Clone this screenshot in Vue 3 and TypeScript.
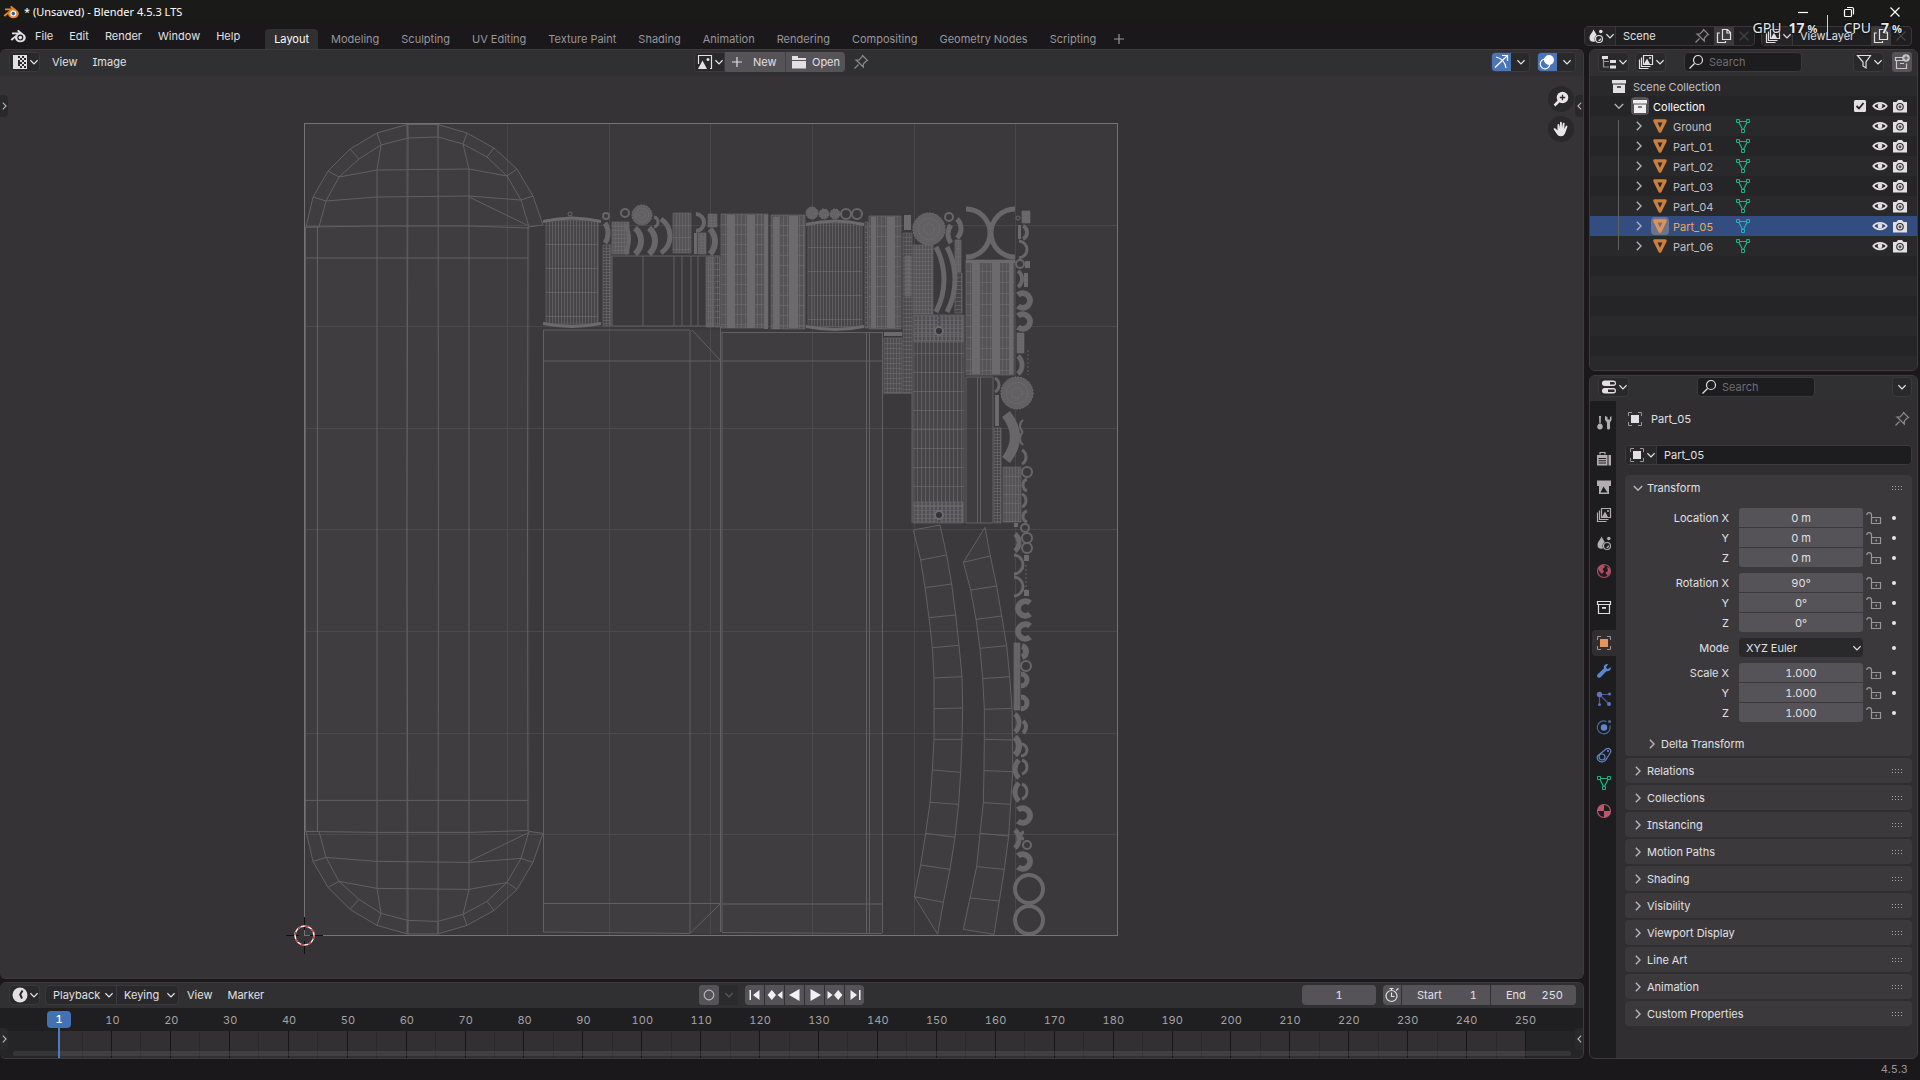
<script setup lang="ts">
import { h, ref } from 'vue'

const icons: Record<string, string> = {
  blender: '<path d="M.6 11.200 6.800 6.200H2V4.600h6.800L7 3l1.300-1.200 5.900 4.600c1.200 1 1.700 2.400 1.500 3.800-.4 2.500-2.600 4.100-5.400 4.100-2.900 0-5.100-1.700-5.300-4.200L2 12.700z" fill="currentColor"/><circle cx="10.300" cy="9.600" r="3" fill="var(--hole)"/><circle cx="10.300" cy="9.600" r="1.800" fill="var(--eye)"/>',
  down: '<path d="m3.200 5.700 4.800 4.800 4.800-4.800" class="s w"/>',
  right: '<path d="m5.500 3.200 4.800 4.800-4.800 4.800" class="s w"/>',
  left: '<path d="M10.500 3.200 5.700 8l4.800 4.800" class="s w"/>',
  uv: '<path d="M1 1h14v14H1z" fill="currentColor"/><path d="M6 2h8v12H6z" fill="#29282a"/><path d="M8 2h2v2H8zm4 0h2v2h-2zM6 4h2v2H6zm4 0h2v2h-2zM8 6h2v2H8zm4 0h2v2h-2zM10 8h2v2h-2zM8 10h2v2H8zm4 0h2v2h-2zm-2 2h2v2h-2zm-4 0h2v2H6z" fill="currentColor"/>',
  image: '<path d="M1.500 10V1.500h13v13H13" class="s"/><path d="M1 15 5.500 6.500 10 15z" fill="currentColor"/><circle cx="11" cy="5.500" r="1.500" fill="currentColor"/>',
  plus: '<path d="M8 3v10M3 8h10" class="s"/>',
  folder: '<path d="M1 2h6v2h8v2H1zM1 7h14v7.500H1z" fill="currentColor"/>',
  pin: '<path d="m9.500 1.500 5 5-1.500.8-2.700 2.700v3L8.200 11 5 7.800 3 6h3L8.700 3.200zM5.500 10.500 1.500 14.500" class="s"/>',
  copy: '<path d="M6.500 1.500h5l3 3v7h-8zM11 2v3h3" class="s"/><path d="M4 5H1.500v9.500h8V13" class="s"/>',
  close: '<path d="m3.500 3.500 9 9m0-9-9 9" class="s"/>',
  scene: '<path d="M5.500 1.500C7 4.500 9.500 7 9 10a3.600 3.600 0 0 1-7.500 0C1.300 7 4.500 4.500 5.500 1.500z" fill="currentColor"/><circle cx="11" cy="11" r="4.500" fill="var(--bg,#29282a)"/><circle cx="11" cy="11" r="3.500" class="s"/><path d="M10.500 12.500a2 2 0 0 0 2-2" class="s"/><circle cx="12.800" cy="3.500" r="1.800" fill="currentColor"/>',
  layers: '<path d="M5.500 1.500h9v9h-9zM3.500 3.500v9h9M1.500 5.500v9h9" class="s"/><path d="m6 10 3-5.500L12 10z" fill="currentColor"/><circle cx="12" cy="4" r="1" fill="currentColor"/>',
  tree: '<path d="M1 2h6v3H1zm8 4h6v3H9zm0 5.500h6v3H9z" fill="currentColor"/><path d="M2.500 5v8H8M2.500 7.500H8" class="s t"/>',
  search: '<circle cx="10" cy="6" r="4.500" class="s"/><path d="M6.500 9.500 1.500 14.500" class="s"/>',
  filter: '<path d="M1.500 1.500h13L10 8v6l-3-2V8z" class="s"/>',
  newcol: '<path d="M9 3.500H1.500v3h10M2.500 6.500v8h10v-5M6 9.500h4" class="s"/><circle cx="12" cy="4" r="3.800" fill="currentColor"/><path d="M12 1.800v4.400M9.800 4h4.400" stroke="#555357" fill="none"/>',
  collection: '<path d="M1 2h14v3.500H1zM2 6.500h12V15H2zm4 1.800v1.500h4V8.300z" fill="currentColor" fill-rule="evenodd"/>',
  collectionO: '<path d="M1.500 2.500h13v3h-13zM2.500 5.500v9h11v-9" class="s"/><path d="M6 8h4v1.800H6z" fill="currentColor"/>',
  object: '<path d="M2.800 2.800h10.400L8 13.200z" fill="none" stroke="currentColor" stroke-width="3.200" stroke-linejoin="round"/>',
  mesh: '<path d="M3.500 3.500h9L8 12.500z" class="s"/><path d="M1.500 1.500h3v3h-3zm10 0h3v3h-3zm-5 10h3v3h-3z" fill="var(--bg,#29282a)" stroke="currentColor"/>',
  eye: '<path d="M1.300 8C4 3.700 12 3.700 14.700 8 12 12.300 4 12.300 1.300 8z" fill="none" stroke="currentColor" stroke-width="1.800"/><circle cx="8" cy="8" r="2.400" fill="currentColor"/>',
  camera: '<path d="M1 4h3.500L6 2h4l1.500 2H15v10.500H1z" fill="currentColor"/><circle cx="8" cy="8.700" r="3.800" fill="#29282a"/><circle cx="8" cy="8.700" r="2.700" fill="currentColor"/><circle cx="8" cy="8.700" r="1.500" fill="#555"/>',
  check: '<rect x="2" y="2" width="12" height="12" rx="1.500" fill="currentColor"/><path d="m4.500 8 2.500 2.500L11.500 5" fill="none" stroke="#222" stroke-width="1.800"/>',
  props: '<rect x="1" y="1.500" width="14" height="5.500" rx="2.700" fill="currentColor"/><path d="M9 3h3.500a1.300 1.300 0 0 1 0 2.600H9z" fill="#29282a"/><rect x="1" y="9" width="14" height="5.500" rx="2.700" fill="currentColor"/><path d="M7 10.500h5.500a1.300 1.300 0 0 1 0 2.600H7z" fill="#29282a"/>',
  box: '<path d="M4 4h8v8H4z" fill="currentColor"/><path d="M1.500 5V1.500H5m6 0h3.500V5m0 6v3.500H11m-6 0H1.500V11" fill="none" stroke="#98969a"/>',
  tool: '<path d="M3 1h2l-.3 7H3.300zM3 8.500h2c2.500 2 2.500 5.500-1 6-3.500-.5-3.500-4-1-6z" fill="currentColor"/><path d="M9 1v4l2 2.500V13a1.500 1.500 0 0 0 3 0V7.500L15.500 5V1L14 2v2.500h-2.500V2z" fill="currentColor"/>',
  render: '<path d="M4 3.500V1.500h5v2" class="s"/><path d="M1 4h10.500v10.500H1zm1.500 3v1h7.500V7zm0 2.300v1h7.500v-1zm0 2.300v1h7.500v-1zM12.500 4H15v10.500h-2.500z" fill="currentColor" fill-rule="evenodd"/>',
  print: '<path d="M1 1.500h14V7H1z" fill="currentColor"/><path d="M3 6h10v9H3z" fill="currentColor"/><path d="m4.500 13.500 3-6 4 6z" fill="#1d1c1f"/>',
  world: '<circle cx="8" cy="8" r="6.500" class="s"/><path d="M2 5c1-2 3.500-3.500 6-3L9 4 6.500 6 8 8.500 6 11 3.500 8.500zM11 4l3 1.500.3 3.500L11.500 13 9.500 9.500 12 8z" fill="currentColor"/>',
  wrench: '<path d="M14.800 4 11.800 6.200 10 4.400 12 1.200C9.500.6 7.300 2.500 7.800 5.500L1.500 11.500c-1.500 2 1 4.300 2.900 2.900l6-6.200c3 .6 4.900-1.500 4.400-4.200z" fill="currentColor"/>',
  particles: '<path d="M4 3.500h8M3.500 5v7M4.500 4.500l8 8" class="s" opacity=".7"/><circle cx="3.500" cy="3.500" r="2.700" fill="currentColor"/><circle cx="13.500" cy="3" r="1.500" fill="currentColor"/><circle cx="3.500" cy="13.500" r="1.500" fill="currentColor"/><circle cx="13" cy="13" r="2" fill="currentColor"/>',
  physics: '<circle cx="8" cy="8.500" r="3.200" fill="currentColor"/><path d="M10.500 2.500A6.500 6.500 0 1 0 14 6.500" class="s" opacity=".7"/><circle cx="13.500" cy="2.500" r="1.600" fill="currentColor" opacity=".7"/>',
  constraint: '<circle cx="6" cy="10" r="3" class="s" stroke-width="2"/><path d="M1.500 9 10 2c3-2 6 1 4.200 3.800L10.500 12A5 5 0 0 1 2 13 4.500 4.500 0 0 1 1.500 9z" class="s"/><circle cx="12" cy="4" r="1.100" fill="currentColor"/>',
  material: '<circle cx="8" cy="8" r="6.500" class="s"/><path d="M8 1.500A6.500 6.500 0 0 0 1.500 8H8zM8 8v6.500A6.500 6.500 0 0 0 14.500 8z" fill="currentColor"/>',
  lock: '<path d="M5.500 8V5a2.300 2.300 0 0 0-4.700 0M5.500 7.500h9v6h-9z" class="s"/><path d="M9.500 9.500h1.500v2H9.500z" fill="currentColor"/>',
  clock: '<circle cx="8" cy="8" r="7.500" fill="currentColor"/><path d="M10.500 3.500 8.200 7.500 10 11.500" fill="none" stroke="#29282a" stroke-width="2"/>',
  watch: '<circle cx="7.500" cy="9" r="5.500" class="s"/><path d="M5.500 1.500h4M7.500 1.500v2M7.500 5.500V9.500h3M12 3.500l2.500-2" class="s"/>',
  record: '<circle cx="8" cy="8" r="4.800" class="s"/>',
  first: '<path d="M2.500 3H4v10H2.500zM12.500 3v10L6 8z" fill="currentColor"/>',
  last: '<path d="M12 3h1.500v10H12zM3.500 3v10L10 8z" fill="currentColor"/>',
  prevkey: '<path d="M4.800 3 9 8l-4.200 5L.6 8zM15.500 4v8L10.500 8z" fill="currentColor"/>',
  nextkey: '<path d="M11.200 3 15.400 8l-4.200 5L7 8zM.5 4v8l5-4z" fill="currentColor"/>',
  play: '<path d="M3.500 2v12L14 8z" fill="currentColor"/>',
  back: '<path d="M12.500 2v12L2 8z" fill="currentColor"/>',
  gizmo: '<path d="M3 3c5 1 9 5 10 11M9 1.500h5.500V7M14.500 1.500 2 13.500" class="s"/>',
  overlay: '<circle cx="6" cy="10" r="4.800" class="s"/><circle cx="10" cy="6" r="5" fill="currentColor"/><path d="M5.500 8.500a4.500 4.500 0 0 0 3 3" fill="none" stroke="#4c75b8"/>',
  zoom: '<circle cx="9.500" cy="6.500" r="5.800" fill="currentColor"/><path d="M6 10 1.500 14.500" stroke="currentColor" stroke-width="2.500"/><path d="M9.500 3.800v5.400M6.800 6.500h5.400" stroke="#29282a" stroke-width="1.300"/>',
  hand: '<path d="M4.500 9.500V4c0-1.300 1.600-1.300 1.800 0L6.800 7 7 1.800c.1-1.300 1.800-1.300 1.900 0V7l.9-4.500c.3-1.200 1.900-.9 1.800.3L11.200 8l1.600-3c.7-1.100 2-.4 1.600.8l-2.200 6.200C11.500 14 10 15.300 8 15.300c-2.500 0-3.600-1.300-4.800-3.300L.8 8.600C.2 7.300 1.600 6.700 2.500 7.600z" fill="currentColor"/>',
  minimise: '<path d="M3 8.500h10" class="s"/>',
  restore: '<rect x="3.500" y="5.500" width="7" height="7" rx="1" class="s"/><path d="M6 3.500h5a1.500 1.500 0 0 1 1.500 1.500v5.500" class="s"/>',
}

const Icon = (p: { name: string }) =>
  h('svg', { class: 'icon', viewBox: '0 0 16 16', 'aria-hidden': 'true', innerHTML: icons[p.name] })
Icon.props = ['name']

const menus = ['File', 'Edit', 'Render', 'Window', 'Help']
const workspaces = ['Layout', 'Modeling', 'Sculpting', 'UV Editing', 'Texture Paint', 'Shading', 'Animation', 'Rendering', 'Compositing', 'Geometry Nodes', 'Scripting']
const objects = ['Ground', 'Part_01', 'Part_02', 'Part_03', 'Part_04', 'Part_05', 'Part_06']
const active = ref('Part_05')
const frames = Array.from({ length: 25 }, (_, i) => (i + 1) * 10)
const transport = [
  ['first', 'Jump to start'], ['prevkey', 'Previous keyframe'], ['back', 'Play reverse'],
  ['play', 'Play'], ['nextkey', 'Next keyframe'], ['last', 'Jump to end'],
]
const tabs = [
  { icon: 'tool', label: 'Tool', color: '#b0aeb1', gap: true },
  { icon: 'render', label: 'Render', color: '#b0aeb1' },
  { icon: 'print', label: 'Output', color: '#b0aeb1' },
  { icon: 'layers', label: 'View Layer', color: '#b0aeb1' },
  { icon: 'scene', label: 'Scene', color: '#b0aeb1' },
  { icon: 'world', label: 'World', color: '#b04f63', gap: true },
  { icon: 'collectionO', label: 'Collection', color: '#e0dee1', gap: true },
  { icon: 'box', label: 'Object', color: '#e2945a', on: true },
  { icon: 'wrench', label: 'Modifiers', color: '#5c86cf' },
  { icon: 'particles', label: 'Particles', color: '#6074c4' },
  { icon: 'physics', label: 'Physics', color: '#5f87cc' },
  { icon: 'constraint', label: 'Constraints', color: '#5f87cc' },
  { icon: 'mesh', label: 'Data', color: '#20b183' },
  { icon: 'material', label: 'Material', color: '#b8586a' },
]
const groups = [
  { name: 'Location', values: ['0 m', '0 m', '0 m'] },
  { name: 'Rotation', values: ['90°', '0°', '0°'] },
  { name: 'Scale', values: ['1.000', '1.000', '1.000'] },
]
const axes = ['X', 'Y', 'Z']
const panels = ['Relations', 'Collections', 'Instancing', 'Motion Paths', 'Shading', 'Visibility', 'Viewport Display', 'Line Art', 'Animation', 'Custom Properties']

/* UV islands */
type P = [number, number]
const line = (pts: P[]) => 'M' + pts.map((p) => p.join(' ')).join('L')
const mirror = (pts: P[]): P[] => pts.map(([x, y]) => [x, 1058.4 - y])

const capOuter: P[] = [[306, 227], [313, 197], [328, 171], [350, 149], [377, 133], [407, 124.5], [438, 124.5], [467, 133], [494, 148], [517, 169], [533, 196], [543, 225]]
const capInner: P[] = [[319, 227], [326, 201], [339, 177], [359, 159], [381, 145], [408, 138], [438, 137], [463, 144], [487, 157], [507, 176], [521, 200], [529, 227]]
const capLines: P[][] = [
  capOuter, capInner,
  ...capOuter.map((p, i): P[] => [p, capInner[i]]),
  [[339, 177], [377, 170], [469, 169], [507, 176]],
  [[326, 201], [377, 197], [469, 196], [521, 200]],
  [[306, 227], [377, 226], [470, 226], [529, 228]],
  [[304, 258], [377, 258], [528, 258]],
  [[469, 197], [529, 226]],
  [[381, 145], [377, 170], [377, 530]], [[408, 125], [407, 530]], [[438, 125], [438.5, 530]],
  [[463, 144], [469, 169], [469, 530]], [[305.5, 227], [305.5, 530]], [[317.5, 227], [317.5, 530]],
  [[528, 227], [527.5, 530]],
]
const capsule = capLines.map(line).join('') + capLines.map((l) => line(mirror(l))).join('')
const capFace = line([...capOuter, [530, 227], [530, 831], ...mirror(capOuter).reverse()]) + 'Z'

const crop = (pts: P[]): P[] => pts.map(([x, y]) => [880 + x / 3, 520 + y / 3])
const s1l = crop([[100, 30], [122, 120], [135, 203], [147, 293], [157, 383], [162, 474], [162, 566], [162, 658], [157, 750], [150, 847], [137, 940], [122, 1035], [103, 1130]])
const s1r = crop([[180, 15], [200, 105], [215, 192], [227, 285], [237, 376], [246, 470], [248, 564], [246, 658], [242, 757], [236, 853], [225, 952], [210, 1048], [190, 1147]])
const s2l = crop([[250, 127], [272, 210], [288, 298], [300, 385], [308, 476], [313, 568], [313, 658], [312, 752], [310, 848], [300, 940], [290, 1040], [270, 1134], [250, 1228]])
const s2r = crop([[331, 108], [350, 198], [365, 288], [380, 377], [389, 470], [396, 565], [398, 660], [398, 755], [392, 853], [386, 948], [373, 1048], [358, 1143], [342, 1243]])
const rungs = (a: P[], b: P[]) => a.map((p, i) => line([p, b[i]])).join('')
const tip1 = crop([[190, 1147], [173, 1243], [103, 1130]])
const tip2 = crop([[250, 127], [315, 22], [331, 108]])
const strips = line(s1l) + line(s1r) + rungs(s1l, s1r) + line(s2l) + line(s2r) + rungs(s2l, s2r) + line(tip1) + line(tip2)
const stripFace = line([...s1l, tip1[1], ...[...s1r].reverse()]) + 'Z' + line([...s2l, ...[...s2r].reverse(), tip2[1]]) + 'Z'

const panelWires = [
  'M543.5 330H690V903M543.5 330V932M543.5 361H720M692 330 720 360M720.5 326V932M543.5 903.5H720M543.5 932 690 933.5 720 904M690 903V933',
  'M722 332.5H882M722 332V932M722 361H882M866.5 332V933M869.5 332V933M882.5 332V933M722 904H882M722 932.5 868 933.5H882',
  'M612 256H720M612 256V326H720M643 256V326M674 256V326M682 256V326M691 256V326M698 256V326',
  'M966 377H993V523H966ZM977.5 377V523M980.5 377V523M884 393H912V523',
].join('')

interface Hatch { x: number; y: number; w: number; h: number; dx: number; dy: number; a?: number }
const hatches: Hatch[] = [
  { x: 546, y: 220, w: 52, h: 104, dx: 3, dy: 24 },
  { x: 603, y: 245, w: 8, h: 81, dx: 3, dy: 3 },
  { x: 612, y: 222, w: 17, h: 32, dx: 3, dy: 4, a: 0.5 },
  { x: 673, y: 213, w: 18, h: 40, dx: 3, dy: 12, a: 0.4 },
  { x: 708, y: 214, w: 9, h: 13, dx: 3, dy: 3, a: 0.6 },
  { x: 698, y: 233, w: 8, h: 21, dx: 3, dy: 3, a: 0.6 },
  { x: 706, y: 257, w: 8, h: 70, dx: 2, dy: 6, a: 0.5 },
  { x: 715, y: 257, w: 5, h: 70, dx: 2, dy: 6 },
  { x: 721, y: 214, w: 47, h: 114, dx: 4, dy: 10, a: 0.4 },
  { x: 771, y: 215, w: 34, h: 114, dx: 4, dy: 10, a: 0.4 },
  { x: 808, y: 223, w: 54, h: 104, dx: 3, dy: 24 },
  { x: 865, y: 222, w: 3, h: 106, dx: 2, dy: 5 },
  { x: 869, y: 216, w: 32, h: 113, dx: 4, dy: 10, a: 0.4 },
  { x: 884, y: 338, w: 18, h: 55, dx: 3, dy: 5, a: 0.3 },
  { x: 903, y: 233, w: 9, h: 160, dx: 3, dy: 4, a: 0.25 },
  { x: 905, y: 256, w: 6, h: 40, dx: 3, dy: 4, a: 0.4 },
  { x: 913, y: 245, w: 20, h: 69, dx: 3, dy: 4, a: 0.4 },
  { x: 955, y: 240, w: 6, h: 32, dx: 3, dy: 8, a: 0.6 },
  { x: 955, y: 273, w: 7, h: 40, dx: 6, dy: 4 },
  { x: 966, y: 260, w: 48, h: 115, dx: 4, dy: 11, a: 0.4 },
  { x: 913, y: 315, w: 51, h: 208, dx: 4, dy: 19 },
  { x: 914, y: 316, w: 49, h: 26, dx: 4, dy: 4 },
  { x: 914, y: 502, w: 49, h: 20, dx: 4, dy: 4 },
  { x: 994, y: 428, w: 7, h: 95, dx: 3, dy: 3 },
  { x: 1003, y: 467, w: 18, h: 55, dx: 3, dy: 9, a: 0.4 },
  { x: 1014, y: 643, w: 6, h: 67, dx: 2, dy: 22, a: 0.6 },
  { x: 1022, y: 211, w: 8, h: 12, dx: 3, dy: 3, a: 0.7 },
  { x: 1017, y: 333, w: 7, h: 20, dx: 3, dy: 3, a: 0.7 },
]
const hatchPath = hatches.map(({ x, y, w, h: hh, dx, dy }) => {
  let d = `M${x} ${y}h${w}v${hh}h${-w}z`
  for (let i = dx; i < w; i += dx) d += `M${x + i + 0.5} ${y}v${hh}`
  for (let j = dy; j < hh; j += dy) d += `M${x} ${y + j + 0.5}h${w}`
  return d
}).join('')

/* Solid bands: x, y, width, height */
const bands = [
  [727, 215, 8, 113], [747, 215, 8, 113], [764, 215, 4, 114], [773, 217, 6, 112], [789, 216, 9, 112],
  [871, 217, 5, 111], [887, 217, 8, 111], [972, 262, 8, 112], [992, 262, 8, 112], [1009, 262, 4, 112],
  [995, 395, 4, 31], [904, 215, 7, 15], [1025, 261, 5, 7], [1024, 273, 4, 14], [1018, 225, 3, 14],
  [884, 332, 18, 4], [694, 233, 3, 21], [1024, 555, 5, 6], [1024, 590, 5, 6], [1014, 523, 4, 4],
]
/* Arcs opening to one side: x, y of the upper end, height, bulge, stroke width */
const arcData = [
  [605, 223, 20, 3, 5], [635, 228, 26, 6, 6], [649, 228, 26, 6, 6], [661, 219, 34, 9, 5], [654, 217, 10, 4, 3],
  [696, 214, 17, 8, 4], [710, 229, 25, 5, 6], [625, 224, 30, 4, 4], [936, 247, 65, 8, 5], [947, 247, 65, 8, 5],
  [951, 225, 18, -3, 5], [957, 219, 19, 4, 5], [1023, 226, 13, 4, 4], [1019, 241, 17, 8, 3],
  [1018, 271, 16, 4, 4], [1018, 295, 11, 12, 6], [1018, 316, 11, 12, 6], [1018, 356, 18, 4, 5],
  [995, 378, 14, 4, 3], [1023, 420, 12, -3, 2], [1023, 432, 13, -3, 2], [1022, 450, 14, 4, 3],
  [1027, 479, 12, -4, 3], [1022, 494, 13, 4, 3], [1027, 511, 11, -4, 3],
  [1015, 534, 17, 4, 5], [1014, 555, 19, 9, 3], [1014, 577, 19, 9, 3],
  [1030, 603, 11, -12, 6], [1030, 626, 11, -12, 6], [1022, 646, 11, 4, 6], [1021, 674, 12, 6, 5], [1021, 697, 12, 6, 5],
  [1015, 714, 18, 4, 5], [1023, 721, 12, 3, 4], [1015, 737, 18, 4, 6], [1021, 744, 12, 6, 3],
  [1019, 760, 18, -4, 5], [1022, 760, 14, 5, 3], [1019, 783, 18, -4, 5], [1022, 784, 15, 5, 3],
  [1018, 810, 11, 12, 6], [1015, 830, 18, 4, 5], [1018, 856, 11, 12, 6], [1024, 832, 7, -3, 3],
]
const arcPath = ([x, y, hh, b]: number[]) => {
  const s = Math.abs(b)
  const r = ((hh * hh) / 4 + s * s) / (2 * s)
  return `M${x} ${y}a${r} ${r} 0 ${s > hh / 2 ? 1 : 0} ${b > 0 ? 1 : 0} 0 ${hh}`
}
/* Rings: cx, cy, r, stroke width */
const rings = [
  [606, 216, 3, 2], [625, 213, 4, 2], [846, 214, 5, 2], [857, 214, 5, 2], [949, 217, 4, 2], [1018, 218, 2, 1],
  [1020, 264, 4, 2], [1027, 472, 5, 2], [1025, 528, 4, 2], [1027, 538, 5, 2], [1027, 548, 5, 2],
  [1026, 666, 5, 2], [1027, 845, 4, 2], [1029, 889, 14, 4], [1029, 920, 14, 4], [570, 214, 2, 1],
]
const discs = [[642, 215, 10], [812, 213, 6], [824, 214, 5], [835, 214, 5], [929, 229, 16], [1017, 393, 16]]
const gridLines = Array.from({ length: 7 }, (_, i) => Math.round(101.6 * (i + 1)))
</script>

<template>
  <div class="app">
    <header class="title">
      <Icon name="blender" class="logo" />
      <span class="caption">* (Unsaved) - Blender 4.5.3 LTS</span>
      <button aria-label="Minimise"><Icon name="minimise" /></button>
      <button aria-label="Restore"><Icon name="restore" /></button>
      <button aria-label="Close"><Icon name="close" /></button>
    </header>

    <div class="topbar">
      <button class="app-menu" aria-label="Blender menu"><Icon name="blender" /></button>
      <nav class="menus"><button v-for="m in menus" :key="m">{{ m }}</button></nav>
      <nav class="spaces">
        <button v-for="(w, i) in workspaces" :key="w" :class="{ on: i === 0 }">{{ w }}</button>
        <button class="add" aria-label="Add workspace"><Icon name="plus" /></button>
      </nav>
      <div class="idbox scene">
        <button class="pick" aria-label="Browse scene"><Icon name="scene" /><Icon name="down" class="chev" /></button>
        <input aria-label="Scene name" value="Scene" />
        <Icon name="pin" class="dim" />
        <button class="lit" aria-label="New scene"><Icon name="copy" /></button>
        <Icon name="close" class="faint" />
      </div>
      <div class="idbox layer">
        <button class="pick" aria-label="Browse view layer"><Icon name="layers" /><Icon name="down" class="chev" /></button>
        <input aria-label="View layer name" value="ViewLayer" />
        <button class="lit" aria-label="New view layer"><Icon name="copy" /></button>
        <Icon name="close" class="faint" />
      </div>
    </div>

    <div class="monitor">
      <span>GPU</span><b>17<small>%</small></b><i></i><span>CPU</span><b class="one">7<small>%</small></b>
    </div>

    <main class="work">
      <div class="left">
        <section class="area editor">
          <div class="head">
            <div class="side">
              <button class="combo" aria-label="Editor type"><Icon name="uv" /><Icon name="down" class="chev" /></button>
              <nav class="menus"><button>View</button><button>Image</button></nav>
            </div>
            <div class="middle">
              <button class="combo flat-r" aria-label="Browse image"><Icon name="image" /><Icon name="down" class="chev" /></button>
              <button class="lit new"><Icon name="plus" />New</button>
              <button class="lit open"><Icon name="folder" />Open</button>
              <button class="pinbtn" aria-label="Pin"><Icon name="pin" class="dim" /></button>
            </div>
            <div class="side end">
              <div class="toggle"><button class="blue" aria-label="Gizmos"><Icon name="gizmo" /></button><button aria-label="Gizmo options"><Icon name="down" class="chev" /></button></div>
              <div class="toggle"><button class="blue" aria-label="Overlays"><Icon name="overlay" /></button><button aria-label="Overlay options"><Icon name="down" class="chev" /></button></div>
            </div>
          </div>
          <div class="canvas">
            <svg class="uv" viewBox="0 76 1583 902" preserveAspectRatio="xMidYMid meet">
              <rect x="304" y="123" width="813" height="812" fill="#3b393c" />
              <g stroke="#49474a" shape-rendering="crispEdges">
                <path v-for="g in gridLines" :key="g" :d="`M${304 + g}.5 124V935M304 ${123 + g}.5H1117`" />
              </g>
              <g fill="#767478" fill-opacity=".08">
                <path :d="capFace" />
                <path :d="stripFace" />
                <path d="M543 330H720V933H543ZM722 332H882V933H722ZM966 377H993V523H966Z" />
              </g>
              <g class="wire">
                <path :d="capsule" />
                <path :d="strips" />
                <path :d="panelWires" />
              </g>
              <rect v-for="(t, i) in hatches" :key="'h' + i" :x="t.x" :y="t.y" :width="t.w" :height="t.h" fill="#7c7a7d" :fill-opacity="t.a ?? 0.2" />
              <path class="hatch" :d="hatchPath" />
              <g class="solid">
                <rect v-for="(b, i) in bands" :key="i" :x="b[0]" :y="b[1]" :width="b[2]" :height="b[3]" />
                <path d="M543 220Q572 213 601 220V223Q572 216 543 223ZM543 322Q572 328 601 322V325Q572 331 543 325ZM806 223Q835 216 864 223V226Q835 219 806 226ZM806 325Q835 331 864 325V328Q835 334 806 328ZM966 260H1015V263H966Z" />
              </g>
              <g class="arcs">
                <path v-for="(a, i) in arcData" :key="i" :d="arcPath(a)" :stroke-width="a[4]" />
                <path d="M966 209A24 24 0 0 1 966 257M1015 209A24 24 0 0 0 1015 257" stroke-width="5" />
                <path d="M1006 414Q1024 437 1006 460" stroke-width="10" />
                <circle v-for="(r, i) in rings" :key="'r' + i" :cx="r[0]" :cy="r[1]" :r="r[2]" :stroke-width="r[3]" />
              </g>
              <g v-for="(d, i) in discs" :key="'d' + i">
                <circle :cx="d[0]" :cy="d[1]" :r="d[2]" fill="#626063" />
                <circle v-for="k in 3" :key="k" :cx="d[0]" :cy="d[1]" :r="(d[2] * k) / 3" fill="none" stroke="#706e71" stroke-width="1" stroke-dasharray="2 1" />
              </g>
              <g fill="#343235" stroke="#6c6a6d" stroke-width="2">
                <circle cx="939" cy="331" r="4" /><circle cx="939" cy="515" r="4" />
              </g>
              <path d="M939 315V326M939 520V524M1028 350V375M1026 565V590" stroke="#4e4c4f" stroke-width="2" stroke-dasharray="2 2" />
              <rect x="304.5" y="123.5" width="813" height="812" fill="none" stroke="#757376" shape-rendering="crispEdges" />
              <path d="M286 935.5H299M310 935.5H323M304.5 917V930M304.5 941V954" stroke="#111" />
              <circle cx="304.5" cy="935.5" r="9.5" fill="none" stroke="#f4f0f0" stroke-width="1.5" />
              <circle cx="304.5" cy="935.5" r="9.5" fill="none" stroke="#cf3b3b" stroke-width="1.5" stroke-dasharray="3.73 3.73" />
            </svg>
            <button class="region l" aria-label="Show toolbar"><Icon name="right" /></button>
            <div class="nav">
              <button aria-label="Zoom"><Icon name="zoom" /></button>
              <button aria-label="Pan"><Icon name="hand" /></button>
            </div>
            <button class="region r" aria-label="Show sidebar"><Icon name="left" /></button>
          </div>
        </section>

        <section class="area timeline">
          <div class="head">
            <div class="side">
              <button class="combo" aria-label="Editor type"><Icon name="clock" /><Icon name="down" class="chev" /></button>
              <div class="pair"><button class="pb">Playback<Icon name="down" class="chev" /></button><button>Keying<Icon name="down" class="chev" /></button></div>
              <nav class="menus"><button>View</button><button>Marker</button></nav>
            </div>
            <div class="middle">
              <button class="lit rec" aria-label="Auto keying"><Icon name="record" /></button>
              <button class="recopt" aria-label="Auto keying options"><Icon name="down" class="chev" /></button>
              <div class="transport"><button v-for="t in transport" :key="t[0]" :aria-label="t[1]"><Icon :name="t[0]" /></button></div>
            </div>
            <div class="side end">
              <input class="frame" aria-label="Current frame" value="1" />
              <div class="range">
                <button aria-label="Preview range"><Icon name="watch" /></button>
                <label>Start<input value="1" /></label>
                <label>End<input value="250" /></label>
              </div>
            </div>
          </div>
          <div class="ruler"><span v-for="f in frames" :key="f">{{ f }}</span></div>
          <div class="track"><div class="cells"><i v-for="n in 50" :key="n"></i></div></div>
          <div class="scroll"></div>
          <div class="playhead"><b>1</b></div>
          <button class="region l" aria-label="Show channels"><Icon name="right" /></button>
          <button class="region r" aria-label="Show sidebar"><Icon name="left" /></button>
        </section>
      </div>

      <div class="right">
        <section class="area outliner">
          <div class="head">
            <button class="combo" aria-label="Editor type"><Icon name="tree" /><Icon name="down" class="chev" /></button>
            <button class="combo" aria-label="Display mode"><Icon name="layers" /><Icon name="down" class="chev" /></button>
            <label class="search"><Icon name="search" /><input type="search" aria-label="Search outliner" placeholder="Search" /></label>
            <button class="combo filter" aria-label="Filter"><Icon name="filter" /><Icon name="down" class="chev" /></button>
            <button class="lit newcol" aria-label="New collection"><Icon name="newcol" /></button>
          </div>
          <div class="rows">
            <div class="row root"><Icon name="collection" /><span class="name">Scene Collection</span></div>
            <div class="row coll">
              <Icon name="down" class="tw" /><span class="badge"><Icon name="collection" /></span><span class="name">Collection</span>
              <Icon name="check" /><Icon name="eye" /><Icon name="camera" />
            </div>
            <div v-for="o in objects" :key="o" class="row obj" :class="{ on: o === active }" @click="active = o">
              <Icon name="right" class="tw" /><span class="badge"><Icon name="object" /></span><span class="name">{{ o }}</span><Icon name="mesh" class="data" />
              <span class="grow"></span><Icon name="eye" /><Icon name="camera" />
            </div>
          </div>
        </section>

        <section class="area props">
          <div class="head">
            <button class="combo" aria-label="Editor type"><Icon name="props" /><Icon name="down" class="chev" /></button>
            <label class="search"><Icon name="search" /><input type="search" aria-label="Search properties" placeholder="Search" /></label>
            <button class="combo opts" aria-label="Options"><Icon name="down" class="chev" /></button>
          </div>
          <div class="pbody">
            <nav class="tabs">
              <button v-for="t in tabs" :key="t.label" :aria-label="t.label" :class="{ on: t.on, gap: t.gap }" :style="{ color: t.color }"><Icon :name="t.icon" /></button>
            </nav>
            <div class="content">
              <div class="crumb"><Icon name="box" /><span>Part_05</span><Icon name="pin" class="dim" /></div>
              <div class="idfield">
                <button aria-label="Browse object"><Icon name="box" /><Icon name="down" class="chev" /></button>
                <input aria-label="Object name" value="Part_05" />
              </div>
              <div class="panel open-panel">
                <button class="phead"><Icon name="down" class="tw" />Transform<span class="grip"></span></button>
                <div class="form">
                  <template v-for="g in groups" :key="g.name">
                    <div v-if="g.name === 'Scale'" class="field mode">
                      <label for="mode">Mode</label>
                      <span class="selectbox"><select id="mode"><option>XYZ Euler</option></select><Icon name="down" class="chev" /></span>
                      <span class="dot"></span>
                    </div>
                    <div class="group">
                      <div v-for="(v, i) in g.values" :key="i" class="field">
                        <label :for="g.name + i">{{ i === 0 ? g.name + ' ' + axes[i] : axes[i] }}</label>
                        <input :id="g.name + i" :value="v" />
                        <Icon name="lock" class="lock" /><span class="dot"></span>
                      </div>
                    </div>
                  </template>
                </div>
                <button class="sub"><Icon name="right" class="tw" />Delta Transform</button>
              </div>
              <div v-for="p in panels" :key="p" class="panel">
                <button class="phead"><Icon name="right" class="tw" />{{ p }}<span class="grip"></span></button>
              </div>
            </div>
          </div>
        </section>
      </div>
    </main>
    <footer class="status">4.5.3</footer>
  </div>
</template>

<style>
body { margin: 0; background: #1a181b; }
svg .s { fill: none; stroke: currentColor; stroke-width: 1.2; }
svg .w { stroke-width: 1.6; }
svg .t { opacity: .6; }
</style>

<style scoped>
.app { --hole: #1b1a1c; --eye: currentColor; display: flex; flex-direction: column; min-height: 100vh; background: #1a181b; color: #e2e0e3; font: 11px/16px Inter, "Liberation Sans", sans-serif; font-feature-settings: "cv08", "tnum"; position: relative; }
*, *::before, *::after { box-sizing: border-box; }
button, input, select { font: inherit; font-feature-settings: inherit; color: inherit; background: none; border: 0; padding: 0; margin: 0; min-width: 0; outline: 0; }
button { display: flex; align-items: center; white-space: nowrap; }
.icon { width: 16px; height: 16px; flex: none; display: block; }
.chev { width: 12px; height: 12px; }
.dim { color: #8b898c; }
.faint { color: #444246; }

.title { height: 22px; background: #1a1b18; display: flex; align-items: center; padding: 1px 17px 0 3px; color: #fff; font-family: "Noto Sans", sans-serif; }
.title button { width: 16px; margin-left: 30px; }
.logo { color: #e8862a; --hole: #fff; --eye: #2a62a0; }
.caption { margin-left: 5px; flex: 1; }
.topbar { height: 27px; display: flex; align-items: flex-start; padding: 4px 8px 0 10px; }
.topbar .menus { margin-top: 2px; gap: 16px; }
.app-menu { margin: 2px 9px 0 0; }
.menus { display: flex; gap: 15px; }
.spaces { display: flex; gap: 4px; margin: 3px auto 0 25px; color: #98969a; }
.spaces button { height: 20px; padding: 0 9px; border-radius: 4px 4px 0 0; }
.spaces .add { padding: 0 2px; }
.spaces .on { background: #302f31; color: #fff; }
.idbox { height: 20px; display: flex; align-items: center; border: 1px solid #39373a; border-radius: 4px; background: #1f1e20; }
.idbox .pick { width: 31px; height: 18px; padding-left: 3px; border-right: 1px solid #39373a; background: #252426; --bg: #252426; }
.idbox input { flex: 1; padding-left: 7px; }
.idbox .lit { border-radius: 0; margin-left: 4px; }
.idbox .faint { margin: 0 2px; width: 16px; }
.scene { width: 171px; margin-right: 6px; }
.layer { width: 151px; }
.lit { background: #555357; height: 20px; min-width: 20px; justify-content: center; border-radius: 3px; }
.idbox .lit { height: 18px; background: #3c3a3d; }

.monitor { position: absolute; right: 18px; top: 15px; height: 26px; display: flex; align-items: center; color: #e8e8e8; font: 14px/24px "Noto Sans", sans-serif; text-shadow: 0 0 2px #000, 0 0 2px #000; pointer-events: none; }
.monitor b { margin-left: 7px; }
.monitor .one { margin-left: 10px; }
.monitor small { font-size: 11px; margin-left: 3px; }
.monitor i { width: 1px; height: 22px; background: #d0d0d0; margin: 0 15px 4px 10px; }

.work { flex: 1; display: flex; gap: 5px; }
.left { flex: 1; min-width: 0; display: flex; flex-direction: column; gap: 3px; }
.right { width: 331px; padding-right: 2px; display: flex; flex-direction: column; gap: 4px; }
.area { border-radius: 6px; overflow: hidden; background: #302e31; border: 1px solid #3d3b3e; border-width: 1px 1px 1px 0; position: relative; }
.head { height: 26px; display: flex; align-items: center; padding-bottom: 3px; background: #302f31; }
.editor { flex: 1; display: flex; flex-direction: column; }
.editor .head, .timeline .head { display: grid; grid-template-columns: 1fr auto 1fr; padding-left: 9px; padding-right: 7px; }
.side, .middle { display: flex; align-items: center; }
.middle { margin-right: 22px; }
.end { justify-content: flex-end; gap: 7px; }
.combo { width: 31px; height: 20px; padding-left: 2px; background: #29282a; border: 1px solid #3b393c; border-radius: 4px; flex: none; }
.side .menus { margin-left: 12px; }
.flat-r { border-radius: 4px 0 0 4px; }
.new { width: 61px; border-radius: 0; justify-content: flex-start; padding-left: 4px; gap: 8px; border-right: 1px solid #444246; }
.open { width: 59px; border-radius: 0 4px 4px 0; gap: 5px; }
.pinbtn { margin-left: 8px; }
.toggle { display: flex; width: 39px; height: 20px; border: 1px solid #3b393c; border-radius: 4px; background: #29282a; overflow: hidden; }
.toggle .blue { width: 19px; padding-left: 1px; background: #4c75b8; color: #fff; }
.toggle button + button { padding-left: 4px; }
.canvas { flex: 1; position: relative; background: #353336; display: flex; }
.uv { width: 100%; flex: 1; display: block; }
.wire { fill: none; stroke: #626063; stroke-width: 1; }
.hatch { fill: none; stroke: #6c6a6d; stroke-width: 1; opacity: .65; }
.solid { fill: #6c6a6d; }
.arcs { fill: none; stroke: #686669; }
.region { position: absolute; height: 22px; width: 8px; background: #29282a; color: #b8b6b9; justify-content: center; }
.region .icon { width: 11px; }
.region.l { left: 0; top: 19px; border-radius: 0 4px 4px 0; }
.region.r { right: 0; top: 19px; border-radius: 4px 0 0 4px; }
.nav { position: absolute; right: 9px; top: 10px; display: flex; flex-direction: column; gap: 4px; }
.nav button { width: 26px; height: 26px; border-radius: 13px; background: #29282a; justify-content: center; color: #e8e6e9; }

.timeline { height: 77px; }
.timeline .head { height: 25px; padding-bottom: 1px; }
.timeline .side .menus { margin-left: 8px; }
.pair { display: flex; height: 20px; margin-left: 5px; border: 1px solid #3b393c; border-radius: 4px; background: #29282a; }
.pair button { width: 61px; padding: 0 1px 0 7px; justify-content: space-between; }
.pair .pb { width: 71px; border-right: 1px solid #3b393c; }
.rec { width: 19px; color: #b8b6b9; }
.recopt { width: 19px; height: 20px; justify-content: center; background: #2b2a2c; color: #5c5a5e; }
.transport { display: flex; gap: 1px; margin-left: 7px; border-radius: 4px; overflow: hidden; }
.transport button { width: 19px; height: 20px; justify-content: center; background: #555357; color: #f2f0f3; }
.frame { width: 74px; height: 20px; background: #555357; border-radius: 4px; text-align: center; }
.range { display: flex; gap: 1px; border-radius: 4px; overflow: hidden; }
.range > * { height: 20px; background: #555357; }
.range button { width: 18px; justify-content: center; }
.range label { width: 88px; display: flex; align-items: center; padding: 0 13px 0 15px; }
.range label + label { width: 85px; padding-right: 13px; }
.range input { flex: 1; width: 20px; text-align: right; }
.ruler { height: 23px; padding: 0 28px 0 83px; display: flex; align-items: center; background: #1f1e20; color: #a5a3a6; }
.ruler span { flex: 1; text-align: center; }
.track { height: 27px; padding: 0 57px 0 58px; background: #252426; }
.cells { height: 100%; display: grid; grid-template-columns: 4fr repeat(49, 5fr); background: #323033; border-right: 1px solid #161517; }
.cells i { border-left: 1px solid #29282a; }
.cells i:nth-child(odd) { border-color: #161517; }
.cells i:first-child { border: 0; }
.scroll { position: absolute; left: 13px; right: 12px; bottom: 2px; height: 5px; border-radius: 3px; background: rgb(120 118 121 / 22%); }
.playhead { position: absolute; left: 47px; top: 28px; bottom: 0; width: 24px; display: flex; flex-direction: column; align-items: center; }
.playhead b { width: 24px; height: 17px; border-radius: 4px; background: #4470b4; color: #fff; text-align: center; font-weight: 500; }
.playhead::after { content: ""; width: 2px; flex: 1; background: #4d7cc2; }
.timeline .region { top: auto; bottom: 8px; }

.outliner { height: 322px; border-left-width: 1px; background: #29282a; }
.outliner .head { padding-left: 8px; padding-right: 5px; gap: 6px; }
.search { display: flex; align-items: center; gap: 5px; width: 118px; height: 20px; padding-left: 3px; background: #1d1c1f; border: 1px solid #3b393c; border-radius: 4px; }
.search input { width: 80px; }
.search input::placeholder { color: #6f6d70; opacity: 1; }
.outliner .search { margin-left: 12px; margin-right: auto; }
.filter { margin-right: 2px; }
.newcol { color: #c8c6c9; }
.rows { position: relative; height: 294px; background: repeating-linear-gradient(#29282a 0 20px, #252426 20px 40px); }
.row { height: 20px; display: flex; align-items: center; padding-right: 9px; gap: 4px; }
.row .name { color: #c2c0c3; padding-top: 2px; }
.row.root { padding-left: 21px; gap: 6px; }
.row.coll { padding-left: 21px; }
.row .tw { width: 14px; height: 14px; margin-right: 1px; color: #b0aeb1; }
.row .badge { width: 18px; height: 18px; border-radius: 4px; display: flex; align-items: center; justify-content: center; }
.coll .badge { background: #555357; color: #f0eef1; }
.coll .name { flex: 1; color: #fff; }
.obj { padding-left: 41px; }
.obj .badge { color: #c9803f; }
.obj .name { width: 58px; }
.obj .data { color: #20b183; }
.grow { flex: 1; }
.obj.on { background: #334d80; --bg: #334d80; }
.obj.on .badge { background: #6b7391; color: #e0925c; }
.obj.on .name { color: #eba95a; }
.obj.on .data { color: #20b2c0; }
.rows::before { content: ""; position: absolute; left: 28px; top: 44px; height: 130px; width: 1px; background: #615f62; }

.props { flex: 1; border-left-width: 1px; display: flex; flex-direction: column; }
.props .head { height: 25px; padding: 0 5px 3px 8px; }
.props .search { margin: 0 auto 0 68px; }
.opts { width: 20px; padding-left: 3px; }
.pbody { flex: 1; display: flex; }
.tabs { width: 26px; padding: 9px 0 0 2px; background: #1d1c1f; display: flex; flex-direction: column; gap: 2px; --bg: #1d1c1f; }
.tabs button { height: 26px; justify-content: center; border-radius: 4px 0 0 4px; }
.tabs .gap { margin-bottom: 8px; }
.tabs .on { background: #302e31; }
.content { flex: 1; min-width: 0; padding: 8px 5px 0 9px; display: flex; flex-direction: column; gap: 2px; }
.crumb { height: 20px; display: flex; align-items: center; gap: 8px; padding: 0 2px; }
.crumb .dim { margin-left: auto; }
.idfield { height: 20px; margin: 14px 0 8px; display: flex; border: 1px solid #3b393c; border-radius: 4px; background: #1d1c1f; }
.idfield button { width: 31px; padding-left: 3px; background: #29282a; border-right: 1px solid #3b393c; border-radius: 4px 0 0 4px; }
.idfield input { flex: 1; padding-left: 7px; }
.panel { background: #3b393c; border-radius: 4px; }
.phead { width: 100%; height: 25px; padding: 0 9px 0 5px; }
.tw { width: 14px; height: 14px; color: #b8b6b9; margin: 0 2px 0 1px; }
.grip { margin-left: auto; width: 12px; height: 6px; background: radial-gradient(circle, #a8a6a9 0 1px, transparent 1px) 0 0 / 3px 3px; }
.open-panel { height: 281px; display: flex; flex-direction: column; }
.form { margin-top: 8px; display: flex; flex-direction: column; gap: 6px; }
.group { display: flex; flex-direction: column; gap: 1px; }
.field { display: flex; align-items: center; height: 19px; }
.field label { width: 104px; text-align: right; margin-right: 10px; }
.field input { width: 124px; height: 19px; background: #555357; text-align: center; }
.group .field:first-child input { border-radius: 3px 3px 0 0; }
.group .field:last-child input { border-radius: 0 0 3px 3px; }
.lock { margin-left: 3px; color: #98969a; }
.dot { width: 4px; height: 4px; border-radius: 2px; background: #e8e6e9; margin-left: 10px; }
.selectbox { position: relative; width: 124px; height: 19px; }
.selectbox select { appearance: none; width: 100%; height: 19px; padding-left: 7px; background: #29282a; border-radius: 4px; }
.selectbox .chev { position: absolute; right: 0; top: 4px; }
.mode .dot { margin-left: 29px; }
.sub { margin: 12px 0 0 19px; height: 20px; }
.status { height: 21px; padding-right: 12px; text-align: right; line-height: 20px; color: #98969a; }
</style>
